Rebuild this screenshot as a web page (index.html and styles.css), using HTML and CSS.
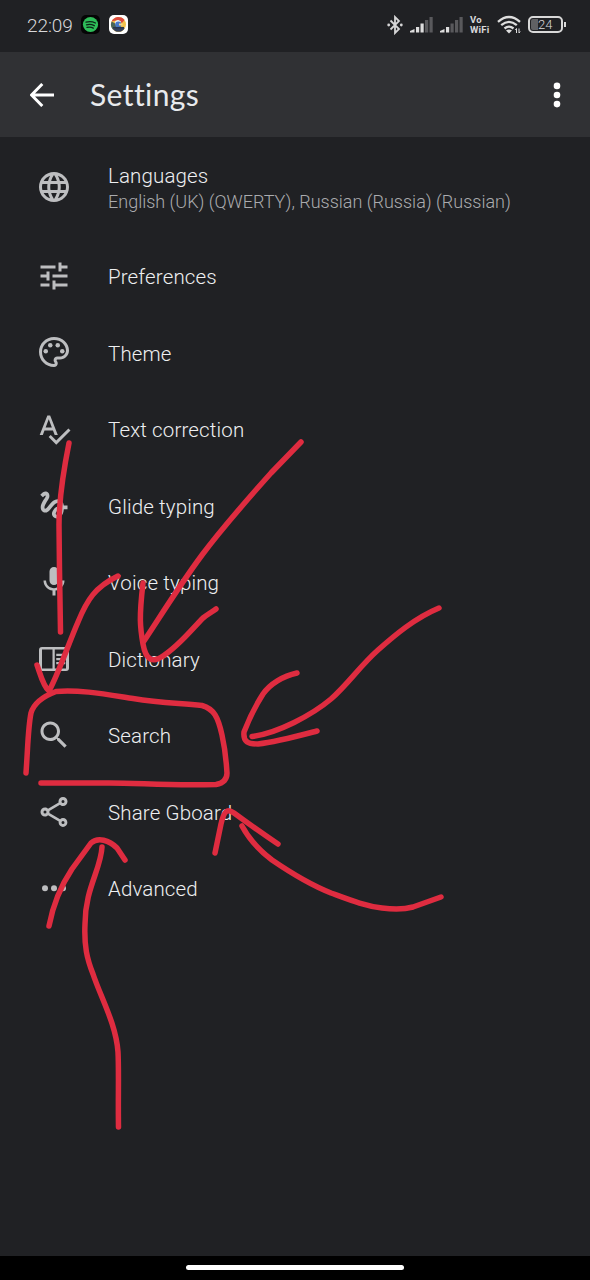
FILE: index.html
```html
<!DOCTYPE html>
<html lang="en">
<head>
<meta charset="utf-8">
<title>Settings</title>
<link rel="stylesheet" href="styles.css">
</head>
<body>
<div class="screen">
  <header class="status">
    <span class="clock">22:09</span>
    <svg class="app-icon" viewBox="0 0 19 19"><rect width="19" height="19" rx="5" fill="#050505"/><circle cx="9.5" cy="9.5" r="7.6" fill="#2ebd59"/><path d="M5 7.2q5-1.5 9.4.8M5.5 9.9q4-1.2 7.8.8M6 12.4q3.400-.9 6.300.7" fill="none" stroke="#0c2415" stroke-width="1.3" stroke-linecap="round"/></svg>
    <svg class="app-icon" viewBox="0 0 19 19"><rect width="19" height="19" rx="5" fill="#fff"/><circle cx="9.500" cy="9.500" r="7.500" fill="#f3c34c"/><path d="M2.600 6.500A7.500 7.500 0 0 1 15.500 5L13 8 9 5Z" fill="#dc4a3d"/><path d="M2.600 6.500A7.500 7.500 0 0 0 4 14.600L9 10Z" fill="#4a6558"/><path d="M3.300 13.500A7.500 7.500 0 0 0 15.700 13.500L12 12Z" fill="#34415d"/><path d="M6 6.500q3-3 6 0l-1 3H6z" fill="#e8eef8"/><circle cx="9.300" cy="9.500" r="3.100" fill="#4878c8"/><path d="M10 8.500h3.500v2H10z" fill="#f3d98c"/><path d="M4 12.700h11" stroke="#29364d" stroke-width="1.500"/></svg>
    <div class="indicators">
      <svg class="bluetooth" viewBox="0 0 16 20"><path d="M3.500 5.500 12 14 8 18V2l4 4-8.500 8.500" fill="none" stroke="#d6d6d7" stroke-width="1.800"/><circle cx="1.700" cy="10" r="1.400" fill="#d6d6d7"/><circle cx="14.300" cy="10" r="1.400" fill="#d6d6d7"/></svg>
      <svg class="signal" viewBox="0 0 23 17"><g fill="#ddd"><path d="M0 16.500V15l4.500-2v3.500zM6 11h3.200v5.500H6zM10.500 7.500h3.200v9h-3.200z"/></g><g fill="#59595c"><path d="M15 4h3.200v12.500H15zM19.500 1h3.200v15.500h-3.200z"/></g></svg>
      <svg class="signal" viewBox="0 0 23 17"><g fill="#ddd"><path d="M0 16.500V15l4.500-2v3.500zM6 11h3.200v5.500H6z"/></g><g fill="#59595c"><path d="M10.500 7.500h3.200v9h-3.200zM15 4h3.200v12.500H15zM19.500 1h3.200v15.500h-3.200z"/></g></svg>
      <div class="vowifi"><span>Vo</span><span>WiFi</span></div>
      <svg class="wifi" viewBox="0 0 24 19"><g fill="none" stroke="#dedede" stroke-width="2.300"><path d="M1 6.800Q12-2.800 23 6.800M4.200 10.200q7.800-6.700 15.600 0M7.500 13.500q4.500-3.700 9 0"/></g><path d="m9 15.600 3 3 3-3q-3-2-6 0z" fill="#dedede"/><path d="M19.500 18v-4.500l-1.200 1.500M22 13.500V18l1.200-1.500" fill="none" stroke="#dedede" stroke-width="1"/></svg>
      <div class="battery"><div class="cell"><span class="charge"></span><span class="percent">24</span></div><span class="tip"></span></div>
    </div>
  </header>

  <div class="appbar">
    <svg class="back" viewBox="0 0 24 24"><path d="M12.300 1 1.500 12l10.800 11M2 12h22" fill="none" stroke="#fff" stroke-width="3"/></svg>
    <h1 class="title">Settings</h1>
    <svg class="more" viewBox="0 0 8 28"><circle cx="4" cy="4.900" r="3.300"/><circle cx="4" cy="14" r="3.300"/><circle cx="4" cy="23.100" r="3.300"/></svg>
  </div>

  <main class="list">
    <div class="row languages">
      <svg class="icon" viewBox="0 0 24 24"><path d="M11.990 2C6.470 2 2 6.480 2 12s4.470 10 9.990 10C17.520 22 22 17.520 22 12S17.520 2 11.990 2zm6.930 6h-2.950c-.32-1.250-.78-2.450-1.380-3.560 1.840.63 3.370 1.910 4.330 3.560zM12 4.040c.83 1.200 1.480 2.530 1.910 3.960h-3.820c.43-1.430 1.080-2.760 1.910-3.960zM4.260 14C4.100 13.360 4 12.690 4 12s.1-1.360.26-2h3.380c-.08.66-.14 1.320-.14 2 0 .68.060 1.340.14 2H4.260zm.82 2h2.950c.32 1.250.78 2.450 1.380 3.560-1.840-.63-3.370-1.900-4.330-3.560zm2.950-8H5.080c.96-1.660 2.490-2.930 4.330-3.560C8.810 5.550 8.350 6.750 8.030 8zM12 19.960c-.83-1.200-1.480-2.530-1.910-3.960h3.820c-.43 1.430-1.080 2.760-1.910 3.960zM14.340 14H9.660c-.09-.66-.16-1.320-.16-2 0-.68.070-1.350.16-2h4.680c.09.65.16 1.320.16 2 0 .68-.07 1.340-.16 2zm.25 5.560c.6-1.110 1.060-2.310 1.380-3.560h2.950c-.96 1.650-2.490 2.930-4.330 3.560zM16.360 14c.08-.66.14-1.320.14-2 0-.68-.06-1.340-.14-2h3.380c.16.64.26 1.310.26 2s-.1 1.360-.26 2h-3.380z"/></svg>
      <div class="copy"><span class="label">Languages</span><span class="detail">English (UK) (QWERTY), Russian (Russia) (Russian)</span></div>
    </div>
    <div class="row">
      <svg class="icon" viewBox="0 0 24 24"><path d="M3 17v2h6v-2H3zM3 5v2h10V5H3zm10 16v-2h8v-2h-8v-2h-2v6h2zM7 9v2H3v2h4v2h2V9H7zm14 4v-2H11v2h10zm-6-4h2V7h4V5h-4V3h-2v6z"/></svg>
      <span class="label">Preferences</span>
    </div>
    <div class="row">
      <svg class="icon" viewBox="0 0 24 24"><path d="M12 22C6.490 22 2 17.510 2 12S6.490 2 12 2s10 4.040 10 9c0 3.310-2.690 6-6 6h-1.770c-.28 0-.5.22-.5.5 0 .12.050.23.130.33.410.47.640 1.060.640 1.670 0 1.380-1.120 2.500-2.500 2.500zm0-18c-4.410 0-8 3.590-8 8s3.590 8 8 8c.28 0 .5-.22.500-.5 0-.16-.08-.28-.14-.35-.41-.46-.63-1.050-.63-1.650 0-1.380 1.120-2.500 2.500-2.500H16c2.210 0 4-1.790 4-4 0-3.860-3.590-7-8-7z"/><circle cx="6.500" cy="11.500" r="1.500"/><circle cx="9.500" cy="7.500" r="1.500"/><circle cx="14.500" cy="7.500" r="1.500"/><circle cx="17.500" cy="11.500" r="1.500"/></svg>
      <span class="label">Theme</span>
    </div>
    <div class="row">
      <svg class="icon" viewBox="0 0 24 24"><path d="M12.450 16h2.090L9.430 3H7.570L2.460 16h2.090l1.120-3h5.640l1.140 3zm-6.020-5L8.500 5.480 10.570 11H6.430zm15.160.59l-8.090 8.090L9.830 16l-1.410 1.410 5.090 5.090L23 13l-1.410-1.410z"/></svg>
      <span class="label">Text correction</span>
    </div>
    <div class="row">
      <svg class="icon" viewBox="0 0 24 24"><path d="M4.590 6.890c.7-.71 1.400-1.350 1.710-1.220.5.200 0 1.030-.3 1.520-.25.420-2.860 3.890-2.860 6.310 0 1.280.480 2.340 1.340 2.980.75.560 1.740.73 2.640.460 1.070-.31 1.950-1.400 3.060-2.770 1.210-1.490 2.830-3.440 4.080-3.440 1.630 0 1.650 1.010 1.760 1.790-3.780.64-5.380 3.670-5.380 5.370 0 1.700 1.440 3.090 3.210 3.090 1.630 0 4.290-1.330 4.690-6.100H21v-2.500h-2.470c-.15-1.650-1.090-4.200-4.030-4.200-2.250 0-4.180 1.910-4.940 2.840-.58.730-2.060 2.480-2.290 2.720-.25.300-.68.840-1.110.84-.45 0-.72-.83-.36-1.920.35-1.090 1.400-2.860 1.850-3.520.78-1.140 1.300-1.920 1.300-3.280C8.950 3.690 7.310 3 6.440 3 5.120 3 3.970 4 3.720 4.250c-.36.360-.66.660-.88.930l1.750 1.710zm9.290 11.660c-.31 0-.74-.26-.74-.72 0-.6.730-2.200 2.870-2.760-.3 2.690-1.430 3.480-2.130 3.480z"/></svg>
      <span class="label">Glide typing</span>
    </div>
    <div class="row">
      <svg class="icon" viewBox="0 0 24 24"><path d="M12 14c1.660 0 2.990-1.340 2.990-3L15 5c0-1.660-1.340-3-3-3S9 3.340 9 5v6c0 1.660 1.340 3 3 3zm5.300-3c0 3-2.540 5.100-5.300 5.100S6.700 14 6.700 11H5c0 3.410 2.720 6.230 6 6.720V21h2v-3.280c3.280-.48 6-3.300 6-6.720h-1.700z"/></svg>
      <span class="label">Voice typing</span>
    </div>
    <div class="row">
      <svg class="icon" viewBox="0 0 24 24"><path fill-rule="evenodd" d="M4 4h16q2 0 2 2v12q0 2-2 2H4q-2 0-2-2V6q0-2 2-2zm0 1.700v12.600h7V5.700zm8.500 0v12.600H20V5.700z"/><path d="M13.500 8.500h6V10h-6zM13.500 11.300h6v1.500h-6zM13.500 14h6v1.500h-6z"/></svg>
      <span class="label">Dictionary</span>
    </div>
    <div class="row">
      <svg class="icon" viewBox="0 0 24 24"><path d="M15.500 14h-.79l-.28-.27C15.410 12.590 16 11.110 16 9.500 16 5.910 13.090 3 9.500 3S3 5.910 3 9.500 5.910 16 9.500 16c1.610 0 3.090-.59 4.230-1.570l.27.280v.79l5 4.990L20.490 19l-4.990-5zm-6 0C7.010 14 5 11.990 5 9.500S7.010 5 9.500 5 14 7.010 14 9.500 11.990 14 9.500 14z"/></svg>
      <span class="label">Search</span>
    </div>
    <div class="row">
      <svg class="icon" viewBox="0 0 24 24"><path d="M18 16.080c-.76 0-1.440.3-1.960.77L8.910 12.700c.05-.23.090-.46.090-.7s-.04-.47-.09-.7l7.050-4.110c.54.500 1.250.810 2.040.810 1.660 0 3-1.340 3-3s-1.340-3-3-3-3 1.340-3 3c0 .24.040.47.090.7L8.040 9.810C7.500 9.310 6.790 9 6 9c-1.660 0-3 1.340-3 3s1.340 3 3 3c.79 0 1.500-.31 2.040-.81l7.120 4.160c-.05.210-.08.430-.08.650 0 1.610 1.310 2.920 2.920 2.920s2.920-1.310 2.920-2.920-1.310-2.920-2.920-2.920zM18 4a1 1 0 1 1 0 2 1 1 0 0 1 0-2zM6 13a1 1 0 1 1 0-2 1 1 0 0 1 0 2zm12 7a1 1 0 1 1 0-2 1 1 0 0 1 0 2z"/></svg>
      <span class="label">Share Gboard</span>
    </div>
    <div class="row">
      <svg class="icon" viewBox="0 0 24 24"><circle cx="6" cy="12.200" r="2"/><circle cx="12" cy="12.200" r="2"/><circle cx="18" cy="12.200" r="2"/></svg>
      <span class="label">Advanced</span>
    </div>
  </main>
  <footer class="navbar"><span class="handle"></span></footer>

  <svg class="drawing" viewBox="0 0 590 1280">
    <path d="M69 443C63 473 59 497 59 525L59.500 570 60.500 632"/>
    <path d="M118 576C95 587 87 600 78 622C68 645 58 675 49 691C43 686 40 673 37 665"/>
    <path d="M301 442L271 473C237 511 214 539 202 555C179 586 160 617 144 641"/>
    <path d="M143 583C139 618 140 627 143 644C146 661 153 663 163 656C179 646 193 628 203 618C208 614 212 612 216 609"/>
    <path d="M26 773C28 745 28 728 31 713C34 703 44 696 56 691.500C78 689 110 695 133 698.500C160 703 177 703 202 705.500C214 709 218 717 222 735C226 753 226 760 227 773C227 779 224 783 216 784.500C170 786 140 783 109 783L41 783"/>
    <path d="M439 608C415 618 395 635 378 650C360 666 348 684 331 699C312 715 278 733 252 736.500"/>
    <path d="M297 673C283 676 270 684 263 694C254 708 249 719 244 732C243 742 248 744 258 744C276 742 298 736 317 731"/>
    <path d="M215 853L221 824C224 811 227 808 234 813C249 824 263 834 278 844"/>
    <path d="M242 826C249 839 260 851 272 860C291 873 311 885 331 893C350 900 365 906 382 908C397 910 406 909 413 907L441 897"/>
    <path d="M49 926C53 905 62 884 72 869L91 843C98 837 109 840 117 848L125 860"/>
    <path d="M102 847C101 869 85 889 85 924C84 946 87 959 93 974C101 998 116 1024 118 1052C119 1071 118 1098 118.500 1127"/>
  </svg>
</div>
</body>
</html>
```
FILE: styles.css
```css
* { box-sizing: border-box; }

body {
  margin: 0;
  background: #202124;
  font-family: Roboto, "Liberation Sans", sans-serif;
}

.screen {
  position: relative;
  display: flex;
  flex-direction: column;
  width: 590px;
  height: 1280px;
  overflow: hidden;
}

.status {
  display: flex;
  align-items: center;
  height: 52px;
  padding: 0 24px 3px 27px;
  color: #d8d8da;
}

.clock {
  width: 54px;
  padding-top: 1px;
  font-size: 19px;
  font-weight: 300;
  letter-spacing: -0.100px;
}

.app-icon {
  width: 19px;
  height: 19px;
  margin-right: 8.500px;
}

.indicators {
  display: flex;
  align-items: center;
  margin-left: auto;
}

.bluetooth { width: 16px; height: 20px; margin-right: 7px; }
.signal { width: 23px; height: 17px; margin-right: 7px; }

.vowifi {
  display: flex;
  flex-direction: column;
  width: 21px;
  margin-right: 6px;
  font-size: 9.500px;
  font-weight: 700;
  letter-spacing: 0.200px;
  line-height: 10px;
}

.wifi { width: 24px; height: 19px; margin-right: 7px; }

.battery { display: flex; align-items: center; gap: 1px; }

.cell {
  display: flex;
  align-items: center;
  width: 35px;
  height: 17px;
  padding: 1px;
  border: 2px solid #d8d8d8;
  border-radius: 5px;
}

.charge { width: 7px; height: 11px; background: #606164; border-radius: 2px 0 0 2px; }
.percent { font-size: 13px; line-height: 12px; font-weight: 300; }
.tip { width: 2px; height: 5px; background: #d8d8d8; }

.appbar {
  display: flex;
  align-items: center;
  height: 85px;
  padding: 0 29px 0 30px;
  background: #303134;
}

.back { width: 24px; height: 24px; }

.title {
  margin: 0 auto 0 36px;
  padding-bottom: 1px;
  color: #e8eaed;
  font-family: Lato, sans-serif;
  font-size: 30px;
  font-weight: 400;
  font-variant-ligatures: none;
  letter-spacing: 0.400px;
  line-height: 36px;
}

.more { width: 8px; height: 28px; fill: #fff; }

.list { flex: 1; }

.row {
  display: flex;
  align-items: center;
  height: 76.550px;
  padding-left: 36px;
}

.languages { height: 101.500px; }

.icon {
  width: 36px;
  height: 36px;
  margin: 0 36px 2px 0;
  fill: #bdbec0;
}

.copy { display: flex; flex-direction: column; padding-top: 2px; }

.label {
  padding-top: 0.600px;
  color: #eeeff1;
  font-size: 20.500px;
  font-weight: 300;
  letter-spacing: 0.140px;
  line-height: 26px;
}

.detail {
  color: #aaabae;
  font-size: 18px;
  font-weight: 300;
  line-height: 26px;
}

.navbar {
  display: flex;
  justify-content: center;
  height: 24px;
  padding-top: 9px;
  background: #000;
}

.handle { width: 218px; height: 5px; border-radius: 3px; background: #fff; }

.drawing {
  position: absolute;
  inset: 0;
  width: 590px;
  height: 1280px;
  fill: none;
  stroke: #df2c40;
  stroke-width: 5.500;
  stroke-linecap: round;
  stroke-linejoin: round;
  pointer-events: none;
}
```
